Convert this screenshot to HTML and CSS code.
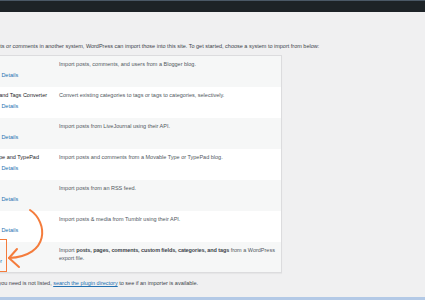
FILE: index.html
```html
<!DOCTYPE html>
<html lang="en">
<head>
    <meta charset="UTF-8">
    <meta name="viewport" content="width=device-width, initial-scale=1.0">
    <title>Import</title>
    <link rel="stylesheet" href="styles.css">
</head>
<body>
    <div class="admin-bar"></div>
    <div class="wrap">
        <p class="intro">If you have posts or comments in another system, WordPress can import those into this site. To get started, choose a system to import from below:</p>
        <table class="importers">
            <tr class="alt">
                <td class="name">Blogger<div class="actions">Install Now | <a href="#">Details</a></div></td>
                <td class="desc">Import posts, comments, and users from a Blogger blog.</td>
            </tr>
            <tr>
                <td class="name">Categories and Tags Converter<div class="actions">Install Now | <a href="#">Details</a></div></td>
                <td class="desc">Convert existing categories to tags or tags to categories, selectively.</td>
            </tr>
            <tr class="alt">
                <td class="name">LiveJournal<div class="actions">Install Now | <a href="#">Details</a></div></td>
                <td class="desc">Import posts from LiveJournal using their API.</td>
            </tr>
            <tr>
                <td class="name">Movable Type and TypePad<div class="actions">Install Now | <a href="#">Details</a></div></td>
                <td class="desc">Import posts and comments from a Movable Type or TypePad blog.</td>
            </tr>
            <tr class="alt">
                <td class="name">RSS<div class="actions">Install Now | <a href="#">Details</a></div></td>
                <td class="desc">Import posts from an RSS feed.</td>
            </tr>
            <tr>
                <td class="name">Tumblr<div class="actions">Install Now | <a href="#">Details</a></div></td>
                <td class="desc">Import posts &amp; media from Tumblr using their API.</td>
            </tr>
            <tr class="alt">
                <td class="name">WordPress<div class="actions"><a href="#">Run Importer</a></div></td>
                <td class="desc">Import <b>posts, pages, comments, custom fields, categories, and tags</b> from a WordPress export file.</td>
            </tr>
        </table>
        <p class="outro">If the importer you need is not listed, <a href="#">search the plugin directory</a> to see if an importer is available.</p>

        <div class="highlight"></div>
        <svg class="arrow" width="60" height="70" viewBox="0 205 60 70">
            <path d="M30 210 C48 222, 50 256, 9 258" fill="none" stroke="#f47c3c" stroke-width="2" stroke-linecap="round"/>
            <path d="M17 249 L9 258 L19 267" fill="none" stroke="#f47c3c" stroke-width="2" stroke-linecap="round" stroke-linejoin="round"/>
        </svg>
    </div>
    <div class="bottom-bar"></div>
</body>
</html>
```

FILE: styles.css
```css
body {
    margin: 0;
    height: 300px;
    overflow: hidden;
    background-color: #f0f0f1;
    font-family: "Liberation Sans", Arial, sans-serif;
    font-size: 5.5px;
    color: #3c434a;
    position: relative;
}

a {
    color: #2271b1;
    text-decoration: none;
}

.admin-bar {
    height: 11px;
    background-color: #1d2327;
    border-top: 1px solid #4a5866;
}

.wrap {
    margin-left: -37px;
    width: 330px;
}

.intro {
    margin: 0;
    padding-top: 30px;
    line-height: 8px;
    white-space: nowrap;
}

.importers {
    margin: 5px 0 0 5px;
    width: 314px;
    border-collapse: collapse;
    border: 1px solid #dcdcde;
    background-color: #fff;
    box-shadow: 0 1px 1px rgba(0, 0, 0, 0.04);
}

.importers tr {
    height: 31px;
}

.importers tr.alt {
    background-color: #f6f7f7;
}

.importers td {
    vertical-align: top;
    padding: 4px 1px 0 4px;
    line-height: 8px;
}

.importers td.name {
    width: 83px;
    padding-left: 2px;
    color: #1d2327;
}

.desc {
    color: #50575e;
}

.desc b {
    color: #3c434a;
    letter-spacing: -0.1px;
}

.actions {
    margin-top: 3px;
    margin-left: -1px;
    color: #a7aaad;
}

.outro {
    margin: 6px 0 0;
    line-height: 8px;
    color: #3c434a;
}

.outro a {
    text-decoration: underline;
}

.highlight {
    position: absolute;
    left: 0;
    top: 239px;
    width: 6px;
    height: 31px;
    border: 1px solid #f47c3c;
    border-left: none;
}

.arrow {
    position: absolute;
    left: 0;
    top: 205px;
}

.bottom-bar {
    position: absolute;
    left: 0;
    right: 0;
    bottom: 0;
    height: 3px;
    background-color: #b3c9e6;
}
```
